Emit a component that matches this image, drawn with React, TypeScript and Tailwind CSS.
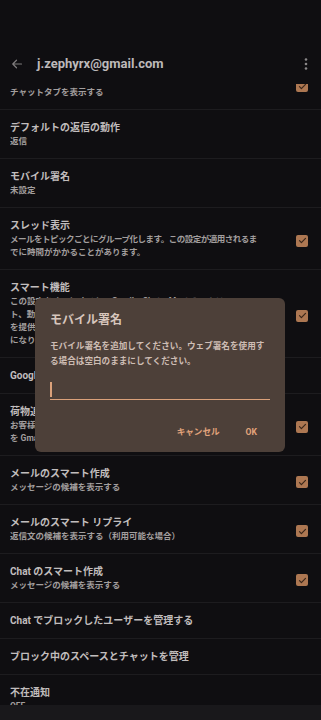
import React from "react";

const FONT = { fontFamily: 'Roboto, "Noto Sans CJK JP", "Noto Sans", sans-serif' };

function Check() {
  return (
    <div className="w-[12px] h-[12px] rounded-[2px] bg-[#ad7752] flex items-center justify-center shrink-0">
      <svg width="9" height="9" viewBox="0 0 24 24" fill="none">
        <path d="M4 12.5l5 5L20 6.5" stroke="#3a2619" strokeWidth="3.2" strokeLinecap="round" strokeLinejoin="round" />
      </svg>
    </div>
  );
}

type RowProps = { title: string; lines?: string[]; check?: boolean; tight?: boolean };

function Row({ title, lines = [], check, tight }: RowProps) {
  const single = lines.length === 0;
  return (
    <div
      className={
        "shrink-0 flex items-center border-b border-[#1d1c1f] pl-[10px] pr-[13px] " +
        (single ? "h-[36px]" : "pt-[11px] pb-[10px]")
      }
    >
      <div className="flex-1 min-w-0">
        <div className="text-[10px] leading-[14px] font-bold text-[#c1bdbd] whitespace-nowrap">{title}</div>
        {lines.map((l, i) => (
          <div
            key={i}
            className={
              "text-[8.5px] leading-[13px] font-bold text-[#a29e9e] whitespace-nowrap overflow-hidden " +
              (tight && i === 0 ? "tracking-[-0.5px]" : "")
            }
          >
            {l}
          </div>
        ))}
      </div>
      {check && (
        <div className="ml-[12px] mt-[3px]">
          <Check />
        </div>
      )}
    </div>
  );
}

export default function App() {
  return (
    <div style={FONT} className="relative w-[321px] h-[720px] bg-[#0f0e11] flex flex-col overflow-hidden">
      <div className="h-[44px] shrink-0" />
      <div className="h-[40px] shrink-0 flex items-center pl-[11px] pr-[13px] bg-[#0f0e11]">
        <svg width="12" height="12" viewBox="0 0 24 24" fill="none">
          <path d="M21 12H4M11 4.5L3.5 12L11 19.5" stroke="#7f7c7d" strokeWidth="2.4" strokeLinecap="round" strokeLinejoin="round" />
        </svg>
        <div className="ml-[14px] text-[13px] font-bold text-[#bdb9ba] flex-1">j.zephyrx@gmail.com</div>
        <svg width="4" height="12" viewBox="0 0 4 12">
          <circle cx="2" cy="1.5" r="1.3" fill="#8a8788" />
          <circle cx="2" cy="6" r="1.3" fill="#8a8788" />
          <circle cx="2" cy="10.5" r="1.3" fill="#8a8788" />
        </svg>
      </div>
      <div className="flex-1 min-h-0 overflow-hidden flex flex-col">
        <div className="h-[26px] shrink-0 overflow-hidden flex border-b border-[#1d1c1f] pl-[10px] pr-[13px]">
          <div className="flex-1 pt-[2px] text-[8.5px] leading-[13px] font-bold text-[#a29e9e] whitespace-nowrap">
            チャットタブを表示する
          </div>
          <div className="ml-[12px] -mt-[4px]">
            <Check />
          </div>
        </div>
        <Row title="デフォルトの返信の動作" lines={["返信"]} />
        <Row title="モバイル署名" lines={["未設定"]} />
        <Row
          title="スレッド表示"
          lines={["メールをトピックごとにグループ化します。この設定が適用されるま", "でに時間がかかることがあります。"]}
          check
          tight
        />
        <Row
          title="スマート機能"
          lines={[
            "この設定をオンにすると、Gmail、Chat、Meet のテキス",
            "ト、動作、写真などのデータを使用してスマート機能",
            "を提供するために、Google がデータを使用すること",
            "になります。",
          ]}
          check
        />
        <Row title="Google Workspace のスマート機能" />
        <Row
          title="荷物追跡"
          lines={["お客様の荷物の配送状況に関する追跡情報とアップデート", "を Gmail の受信トレイの上部に表示します。"]}
          check
        />
        <Row title="メールのスマート作成" lines={["メッセージの候補を表示する"]} check />
        <Row title="メールのスマート リプライ" lines={["返信文の候補を表示する（利用可能な場合）"]} check />
        <Row title="Chat のスマート作成" lines={["メッセージの候補を表示する"]} check />
        <Row title="Chat でブロックしたユーザーを管理する" />
        <Row title="ブロック中のスペースとチャットを管理" />
        <Row title="不在通知" lines={["OFF"]} />
      </div>
      <div className="h-[15px] shrink-0 bg-[#19181b]" />

      <div className="absolute left-[35px] top-[298px] w-[250px] h-[154px] rounded-[6px] bg-[#4d4039] px-[15px] pt-[14px]">
        <div className="text-[12px] leading-[16px] font-bold text-[#d7c6bd]">モバイル署名</div>
        <div className="mt-[11px] text-[8.6px] leading-[15px] font-bold text-[#cdbdb4]">
          モバイル署名を追加してください。ウェブ署名を使用する場合は空白のままにしてください。
        </div>
        <div className="mt-[7px] h-[24px] border-b-[1.5px] border-[#dba17a] flex items-start pt-[6px]">
          <div className="w-[1.5px] h-[15px] bg-[#dba17a]" />
        </div>
        <div className="flex justify-end items-center mt-[26px] gap-[26px] pr-[13px]">
          <div className="text-[8.6px] font-bold text-[#e2a47c]">キャンセル</div>
          <div className="text-[8.6px] font-bold text-[#e2a47c]">OK</div>
        </div>
      </div>
    </div>
  );
}
